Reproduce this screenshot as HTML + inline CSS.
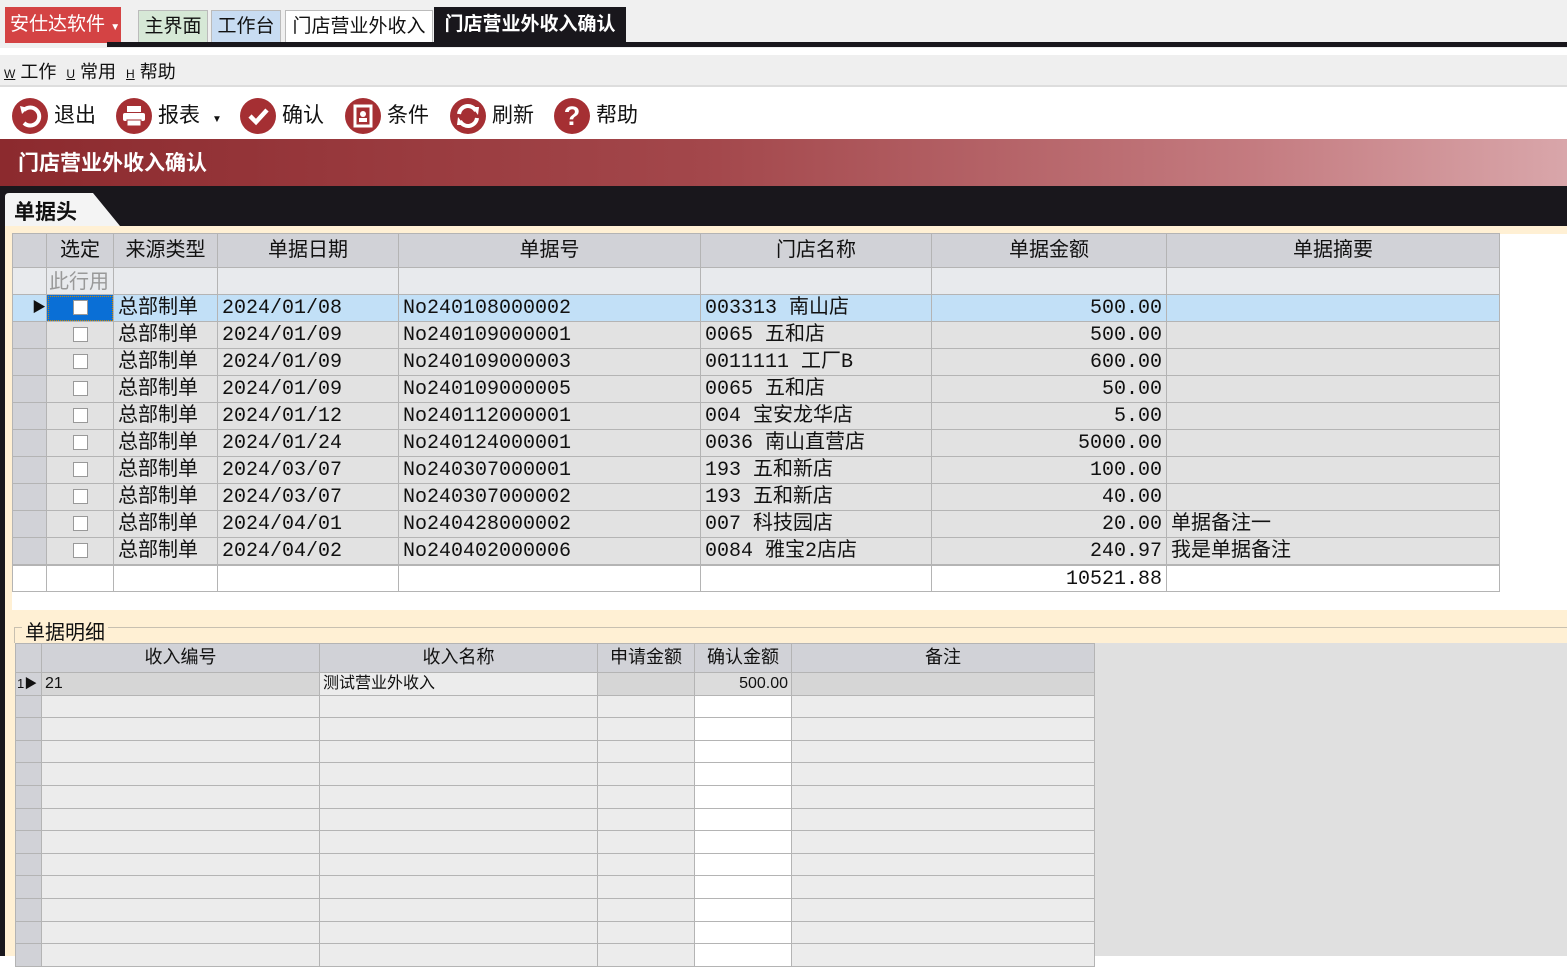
<!DOCTYPE html>
<html><head><meta charset="utf-8">
<style>
*{margin:0;padding:0;box-sizing:border-box}
body{width:1567px;height:956px;overflow:hidden;background:#fff;font-family:"Liberation Sans","Noto Sans CJK SC",sans-serif;position:relative;color:#111}
.abs{position:absolute}
.topbar{left:0;top:0;width:1567px;height:48px;background:#f0f0f0}
.redbtn{left:5px;top:7px;width:116px;height:36px;background:#d44344;color:#fff;font-size:19px;line-height:36px;padding-left:5px}
.tab{top:10px;height:32px;font-size:19px;line-height:32px;text-align:center;border:1px solid #bbb;border-bottom:none}
.menu{left:0;top:55px;width:1567px;height:32px;background:#efefef;border-bottom:2px solid #ddd;font-size:18px;line-height:34px}
.tb{top:96px;height:40px;font-size:21px;line-height:40px}
.ic{position:absolute;top:2px;width:36px;height:36px;border-radius:50%;background:#a52f33}
.band{left:0;top:139px;width:1567px;height:47px;background:linear-gradient(90deg,#8c2a2e 0%,#a3474b 45%,#c47b80 80%,#d9a6aa 100%);color:#fff;font-size:21px;font-weight:bold;line-height:50px;padding-left:18px}
.black{left:0;top:186px;width:1567px;height:40px;background:#19171c}
table{border-collapse:collapse;table-layout:fixed;position:absolute}
td{border:1px solid #b4b4b4;overflow:hidden;white-space:nowrap;vertical-align:top}
.g1 td{height:27px;font-size:20px;background:#e2e2e2;padding:4px 4px 0;font-family:"Liberation Mono","Noto Sans CJK SC",monospace;line-height:20px}
.g1 tr.h td{height:34px;background:#d1d2d7;text-align:center;font-family:"Liberation Sans","Noto Sans CJK SC",sans-serif;font-size:20px;padding-top:6px}
.g1 tr.f td{background:#e8eaed;color:#999}
.g1 tr.sel td{background:#c2e0f7}
.g1 td.rh{background:#d1d2d7;padding:4px 0 0}
.g1 tr.t td{background:#fff}
.r{text-align:right}
.cb{display:inline-block;width:15px;height:15px;border:1px solid #999;background:#fff;vertical-align:middle}
.g2 td{height:22.6px;font-size:16px;background:#ececec;padding:2px 3px 0;line-height:18px}
.g2 tr.h td{height:29px;background:#d1d2d7;text-align:center;font-size:18px;padding-top:4px}
.g2 td.rh{background:#d1d2d7}
.g2 td.w{background:#fff}
</style></head><body>
<div class="abs topbar"></div>
<div class="abs redbtn">安仕达软件 <span style="font-size:10px">▼</span></div>
<div class="abs" style="left:107px;top:42px;width:1460px;height:5px;background:#19171c"></div>
<div class="abs tab" style="left:138px;width:70px;background:#d6e8d6">主界面</div>
<div class="abs tab" style="left:211px;width:70px;background:#c8dcf2">工作台</div>
<div class="abs tab" style="left:285px;width:148px;background:#fff">门店营业外收入</div>
<div class="abs tab" style="left:434px;width:192px;top:7px;height:36px;line-height:36px;background:#19171c;color:#fff;font-weight:bold;border:none">门店营业外收入确认</div>
<div class="abs menu"><span style="font-size:12px;text-decoration:underline;margin-left:4px">W</span> 工作 &nbsp;<span style="font-size:12px;text-decoration:underline">U</span> 常用 &nbsp;<span style="font-size:12px;text-decoration:underline">H</span> 帮助</div>
<div class="abs tb" style="left:12px"><div class="ic" style="left:0"><svg width="36" height="36"><path d="M12 12 A9 9 0 1 1 12 25" stroke="#fff" stroke-width="4" fill="none"/><path d="M8 8 L16 10 L10 16Z" fill="#fff"/></svg></div><span style="margin-left:42px">退出</span></div>
<div class="abs tb" style="left:116px"><div class="ic" style="left:0"><svg width="36" height="36"><rect x="11" y="8" width="14" height="6" fill="#fff"/><rect x="7" y="15" width="22" height="8" rx="2" fill="#fff"/><rect x="11" y="22" width="14" height="6" fill="#fff" stroke="#a52f33"/></svg></div><span style="margin-left:42px">报表</span><span style="font-size:10px;margin-left:12px">▼</span></div>
<div class="abs tb" style="left:240px"><div class="ic" style="left:0"><svg width="36" height="36"><path d="M10 18 L16 24 L27 12" stroke="#fff" stroke-width="4.5" fill="none"/></svg></div><span style="margin-left:42px">确认</span></div>
<div class="abs tb" style="left:345px"><div class="ic" style="left:0"><svg width="36" height="36"><rect x="10" y="8" width="16" height="20" fill="none" stroke="#fff" stroke-width="3"/><circle cx="18" cy="16" r="3" fill="#fff"/><rect x="14" y="20" width="8" height="4" fill="#fff"/></svg></div><span style="margin-left:42px">条件</span></div>
<div class="abs tb" style="left:450px"><div class="ic" style="left:0"><svg width="36" height="36"><path d="M9 16 A9 9 0 0 1 26 13" stroke="#fff" stroke-width="4" fill="none"/><path d="M27 20 A9 9 0 0 1 10 23" stroke="#fff" stroke-width="4" fill="none"/><path d="M22 9 L29 9 L28 17Z M14 27 L7 27 L8 19Z" fill="#fff"/></svg></div><span style="margin-left:42px">刷新</span></div>
<div class="abs tb" style="left:554px"><div class="ic" style="left:0;text-align:center;color:#fff;font-size:27px;font-weight:bold;line-height:36px">?</div><span style="margin-left:42px">帮助</span></div>
<div class="abs band">门店营业外收入确认</div>
<div class="abs black"></div>
<svg class="abs" style="left:5px;top:193px" width="116" height="33"><path d="M0 4 Q0 0 4 0 L88 0 L115 33 L0 33Z" fill="#f4f4f4"/></svg>
<div class="abs" style="left:14px;top:196px;font-size:21px;font-weight:bold">单据头</div>
<div class="abs" style="left:0;top:226px;width:5px;height:730px;background:#19171c"></div>
<div class="abs" style="left:5px;top:226px;width:1562px;height:8px;background:#fff0d4"></div>
<div class="abs" style="left:5px;top:226px;width:7px;height:384px;background:#fff0d4"></div>
<table class="g1" style="left:12px;top:233px;width:1487px">
<colgroup><col style="width:34px"><col style="width:67px"><col style="width:104px"><col style="width:181px"><col style="width:302px"><col style="width:231px"><col style="width:235px"><col style="width:333px"></colgroup>
<tr class="h"><td class="rh"></td><td>选定</td><td>来源类型</td><td>单据日期</td><td>单据号</td><td>门店名称</td><td>单据金额</td><td>单据摘要</td></tr>
<tr class="f"><td class="rh"></td><td style="padding:4px 2px 0;font-family:'Liberation Sans','Noto Sans CJK SC',sans-serif">此行用</td><td></td><td></td><td></td><td></td><td></td><td></td></tr>
<tr class="sel"><td class="rh" style="text-align:right;font-size:14px">▶</td><td style="background:#0a6fd6;text-align:center;outline:1px dotted #c80;outline-offset:-2px"><span class="cb"></span></td><td>总部制单</td><td>2024/01/08</td><td>No240108000002</td><td>003313 南山店</td><td class="r">500.00</td><td></td></tr>
<tr><td class="rh"></td><td style="text-align:center"><span class="cb"></span></td><td>总部制单</td><td>2024/01/09</td><td>No240109000001</td><td>0065 五和店</td><td class="r">500.00</td><td></td></tr>
<tr><td class="rh"></td><td style="text-align:center"><span class="cb"></span></td><td>总部制单</td><td>2024/01/09</td><td>No240109000003</td><td>0011111 工厂B</td><td class="r">600.00</td><td></td></tr>
<tr><td class="rh"></td><td style="text-align:center"><span class="cb"></span></td><td>总部制单</td><td>2024/01/09</td><td>No240109000005</td><td>0065 五和店</td><td class="r">50.00</td><td></td></tr>
<tr><td class="rh"></td><td style="text-align:center"><span class="cb"></span></td><td>总部制单</td><td>2024/01/12</td><td>No240112000001</td><td>004 宝安龙华店</td><td class="r">5.00</td><td></td></tr>
<tr><td class="rh"></td><td style="text-align:center"><span class="cb"></span></td><td>总部制单</td><td>2024/01/24</td><td>No240124000001</td><td>0036 南山直营店</td><td class="r">5000.00</td><td></td></tr>
<tr><td class="rh"></td><td style="text-align:center"><span class="cb"></span></td><td>总部制单</td><td>2024/03/07</td><td>No240307000001</td><td>193 五和新店</td><td class="r">100.00</td><td></td></tr>
<tr><td class="rh"></td><td style="text-align:center"><span class="cb"></span></td><td>总部制单</td><td>2024/03/07</td><td>No240307000002</td><td>193 五和新店</td><td class="r">40.00</td><td></td></tr>
<tr><td class="rh"></td><td style="text-align:center"><span class="cb"></span></td><td>总部制单</td><td>2024/04/01</td><td>No240428000002</td><td>007 科技园店</td><td class="r">20.00</td><td>单据备注一</td></tr>
<tr><td class="rh"></td><td style="text-align:center"><span class="cb"></span></td><td>总部制单</td><td>2024/04/02</td><td>No240402000006</td><td>0084 雅宝2店店</td><td class="r">240.97</td><td>我是单据备注</td></tr>
<tr class="t"><td class="rh" style="border-top:2px solid #b4b4b4"></td><td style="border-top:2px solid #b4b4b4"></td><td style="border-top:2px solid #b4b4b4"></td><td style="border-top:2px solid #b4b4b4"></td><td style="border-top:2px solid #b4b4b4"></td><td style="border-top:2px solid #b4b4b4"></td><td class="r" style="border-top:2px solid #b4b4b4">10521.88</td><td style="border-top:2px solid #b4b4b4"></td></tr>
</table>
<div class="abs" style="left:5px;top:610px;width:1562px;height:33px;background:#fff0d4"></div>
<div class="abs" style="left:14px;top:627px;width:1553px;height:1px;background:#c8c0b0"></div>
<div class="abs" style="left:14px;top:627px;width:1px;height:20px;background:#c8c0b0"></div>
<div class="abs" style="left:22px;top:616px;font-size:20px;background:#fff0d4;padding:0 3px">单据明细</div>
<div class="abs" style="left:5px;top:643px;width:10px;height:313px;background:#fff0d4"></div>
<div class="abs" style="left:1093px;top:643px;width:474px;height:313px;background:#e0e0e0"></div>
<table class="g2" style="left:15px;top:643px;width:1079px">
<colgroup><col style="width:26px"><col style="width:278px"><col style="width:278px"><col style="width:97px"><col style="width:97px"><col style="width:303px"></colgroup>
<tr class="h"><td class="rh"></td><td>收入编号</td><td>收入名称</td><td>申请金额</td><td>确认金额</td><td>备注</td></tr>
<tr><td class="rh" style="font-size:13px;padding:2px 1px 0">1▶</td><td style="background:#d6d6d6">21</td><td>测试营业外收入</td><td style="background:#d6d6d6"></td><td class="r" style="background:#dcdcdc">500.00</td><td style="background:#d6d6d6"></td></tr>
<tr><td class="rh"></td><td></td><td></td><td></td><td class="w"></td><td></td></tr>
<tr><td class="rh"></td><td></td><td></td><td></td><td class="w"></td><td></td></tr>
<tr><td class="rh"></td><td></td><td></td><td></td><td class="w"></td><td></td></tr>
<tr><td class="rh"></td><td></td><td></td><td></td><td class="w"></td><td></td></tr>
<tr><td class="rh"></td><td></td><td></td><td></td><td class="w"></td><td></td></tr>
<tr><td class="rh"></td><td></td><td></td><td></td><td class="w"></td><td></td></tr>
<tr><td class="rh"></td><td></td><td></td><td></td><td class="w"></td><td></td></tr>
<tr><td class="rh"></td><td></td><td></td><td></td><td class="w"></td><td></td></tr>
<tr><td class="rh"></td><td></td><td></td><td></td><td class="w"></td><td></td></tr>
<tr><td class="rh"></td><td></td><td></td><td></td><td class="w"></td><td></td></tr>
<tr><td class="rh"></td><td></td><td></td><td></td><td class="w"></td><td></td></tr>
<tr><td class="rh"></td><td></td><td></td><td></td><td class="w"></td><td></td></tr>
</table>
</body></html>
